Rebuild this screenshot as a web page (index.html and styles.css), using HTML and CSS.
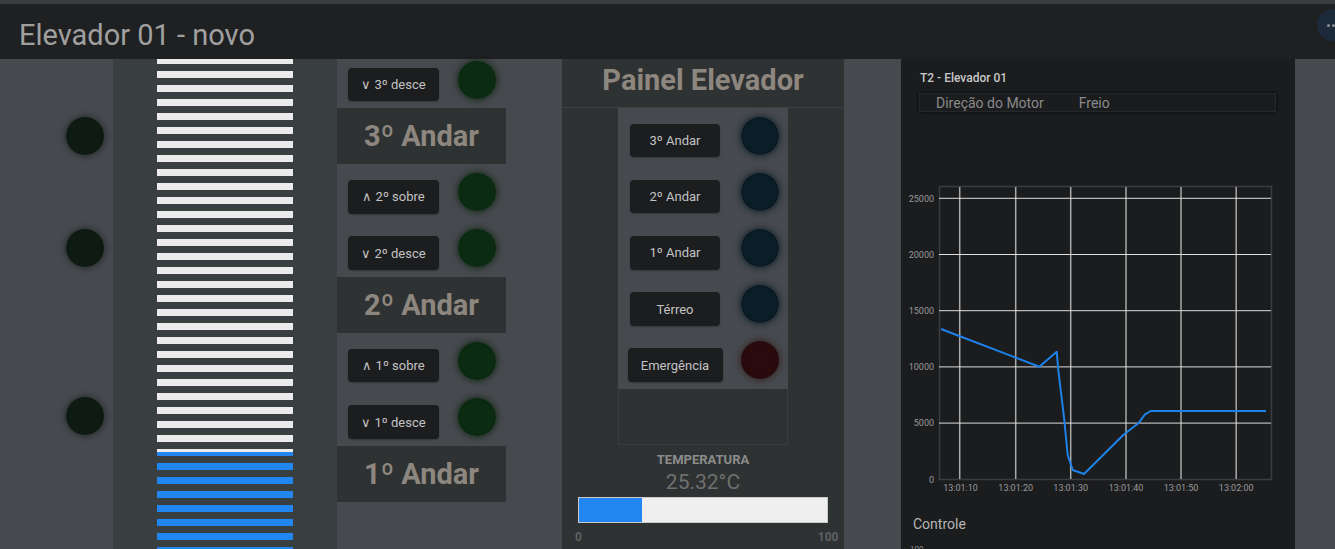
FILE: index.html
```html
<!DOCTYPE html>
<html lang="pt">
<head>
<meta charset="utf-8">
<title>Elevador 01 - novo</title>
<link rel="stylesheet" href="styles.css">
</head>
<body>
<div class="topline"></div>
<header class="header">
  <h1 class="title">Elevador 01 - novo</h1>
  <button class="menu-btn" aria-label="menu"><span class="dot"></span><span class="dot"></span><span class="dot"></span></button>
</header>
<main class="main">
  <section class="col-leds">
    <div class="led led-black led-l1"></div>
    <div class="led led-black led-l2"></div>
    <div class="led led-black led-l3"></div>
  </section>

  <section class="col-shaft">
    <div class="shaft"></div>
  </section>

  <section class="col-calls">
    <div class="call-row"><div class="btn call-btn">∨ 3º desce</div><div class="led led-green"></div></div>
    <div class="floor">3º Andar</div>
    <div class="call-row"><div class="btn call-btn">∧ 2º sobre</div><div class="led led-green"></div></div>
    <div class="call-row"><div class="btn call-btn">∨ 2º desce</div><div class="led led-green"></div></div>
    <div class="floor">2º Andar</div>
    <div class="call-row"><div class="btn call-btn">∧ 1º sobre</div><div class="led led-green"></div></div>
    <div class="call-row"><div class="btn call-btn">∨ 1º desce</div><div class="led led-green"></div></div>
    <div class="floor">1º Andar</div>
  </section>

  <section class="col-panel">
    <div class="panel-title">Painel Elevador</div>
    <div class="panel-body">
      <div class="keypad">
        <div class="keys">
          <div class="key-row"><div class="key-cell"><div class="btn key">3º Andar</div></div><div class="led led-blue"></div></div>
          <div class="key-row"><div class="key-cell"><div class="btn key">2º Andar</div></div><div class="led led-blue"></div></div>
          <div class="key-row"><div class="key-cell"><div class="btn key">1º Andar</div></div><div class="led led-blue"></div></div>
          <div class="key-row"><div class="key-cell"><div class="btn key">Térreo</div></div><div class="led led-blue"></div></div>
          <div class="key-row"><div class="key-cell"><div class="btn key key-wide">Emergência</div></div><div class="led led-red"></div></div>
        </div>
        <div class="keys-foot"></div>
      </div>
    </div>
    <div class="gauge">
      <div class="gauge-title">TEMPERATURA</div>
      <div class="gauge-value">25.32°C</div>
      <div class="gauge-bar"><div class="gauge-fill" style="width:25.32%"></div></div>
      <div class="gauge-scale"><span>0</span><span>100</span></div>
    </div>
  </section>

  <div class="spacer"></div>

  <section class="col-chart">
    <div class="chart-title">T2 - Elevador 01</div>
    <div class="legend"><span>Direção do Motor</span><span>Freio</span></div>
    <svg class="chart" width="394" height="320" viewBox="0 0 394 320">
      <rect x="38.5" y="6.5" width="332" height="293" fill="none" stroke="#3b3c3f" stroke-width="1.5"/>
      <g stroke="#a9a9a9" stroke-width="1.5">
        <line x1="58.7" y1="7" x2="58.7" y2="299"/>
        <line x1="114.7" y1="7" x2="114.7" y2="299"/>
        <line x1="169.7" y1="7" x2="169.7" y2="299"/>
        <line x1="225" y1="7" x2="225" y2="299"/>
        <line x1="280" y1="7" x2="280" y2="299"/>
        <line x1="335.2" y1="7" x2="335.2" y2="299"/>
      </g>
      <g stroke="#dedede" stroke-width="1">
        <line x1="38" y1="18.3" x2="370" y2="18.3"/>
        <line x1="38" y1="74.5" x2="370" y2="74.5"/>
        <line x1="38" y1="130.7" x2="370" y2="130.7"/>
        <line x1="38" y1="186.9" x2="370" y2="186.9"/>
        <line x1="38" y1="243.1" x2="370" y2="243.1"/>
      </g>
      <g class="axis" text-anchor="end">
        <text x="33" y="21.5">25000</text>
        <text x="33" y="77.7">20000</text>
        <text x="33" y="133.9">15000</text>
        <text x="33" y="190.1">10000</text>
        <text x="33" y="246.3">5000</text>
        <text x="33" y="302.5">0</text>
      </g>
      <g class="axis" text-anchor="middle">
        <text x="59.5" y="311">13:01:10</text>
        <text x="114.7" y="311">13:01:20</text>
        <text x="169.7" y="311">13:01:30</text>
        <text x="225" y="311">13:01:40</text>
        <text x="280" y="311">13:01:50</text>
        <text x="335.2" y="311">13:02:00</text>
      </g>
      <polyline fill="none" stroke="#1e82ea" stroke-width="2" stroke-linejoin="round"
        points="40,149 138.3,186.7 155.7,171.7 157.3,190 163.3,240 166.7,275 171.7,290 183,294 222.3,255 237.3,243.3 244,234.3 249.7,231 365,231"/>
    </svg>
    <div class="controle">Controle</div>
    <div class="tiny">100</div>
  </section>
</main>
</body>
</html>
```

FILE: styles.css
```css
* { box-sizing: border-box; margin: 0; padding: 0; }
html, body { width: 1335px; height: 549px; overflow: hidden; }
body {
  background: #464a4e;
  font-family: Roboto, "Liberation Sans", Arial, sans-serif;
  position: relative;
}

.topline { height: 4px; background: #3b3c3e; }
.header { height: 55px; background: #1f2022; padding: 16px 0 0 19px; }
.title { font-size: 29px; line-height: 30px; font-weight: 400; color: #a0a0a0; }
.menu-btn {
  position: absolute; top: 9px; left: 1317px;
  width: 32px; height: 32px; border-radius: 50%;
  background: #1d2a3b; border: none;
  display: flex; align-items: center; gap: 2.6px; padding-left: 9.5px;
}
.dot { width: 3px; height: 3px; border-radius: 50%; background: #8a8f96; }

.main { display: flex; height: 490px; }

/* LEDs */
.led { width: 38px; height: 38px; border-radius: 50%; flex: none; }
.led-black { background: radial-gradient(circle, #0e1b13 55%, #0a140e 100%); box-shadow: 0 0 6px 1px rgba(0,0,0,.45); }
.led-green { background: radial-gradient(circle, #0b2c12 55%, #07200c 100%); box-shadow: 0 0 6px 1px rgba(8,30,10,.75); }
.led-blue  { background: radial-gradient(circle, #0a1e27 55%, #07161d 100%); box-shadow: 0 0 6px 1px rgba(5,22,32,.75); }
.led-red   { background: radial-gradient(circle, #2a0a0d 55%, #1e0709 100%); box-shadow: 0 0 6px 1px rgba(50,8,10,.6); }

.col-leds { width: 113px; padding: 58px 0 0 66px; display: flex; flex-direction: column; }
.led-l2 { margin-top: 74px; }
.led-l3 { margin-top: 130px; }

.col-shaft { width: 224px; background: #393e40; padding-left: 44px; }
.shaft {
  width: 136px; height: 100%;
  background:
    repeating-linear-gradient(to bottom, transparent 0 5px, #393e40 5px 12px, transparent 12px 14px),
    linear-gradient(to bottom, #ebebeb 0 393px, #2186f0 393px);
}

/* buttons */
.btn {
  background: #1c1d1f; color: #c3c3c3; border-radius: 4px;
  font-size: 13px; height: 33.5px;
  display: flex; align-items: center; justify-content: center;
  box-shadow: 0 1px 2px rgba(0,0,0,.25);
  white-space: nowrap;
}

.col-calls { width: 225px; display: grid; grid-template-rows: 49px repeat(7, 56.3px); align-content: start; }
.call-row { display: flex; align-items: flex-end; padding-left: 11px; }
.call-btn { width: 91px; margin-bottom: 7px; }
.call-row .led { margin-left: 19px; margin-bottom: 9.5px; }
.floor {
  width: 169px; background: #2e3233;
  display: flex; align-items: center; justify-content: center;
  font-size: 29px; font-weight: 700; color: #8e877f;
}

.col-panel { width: 282px; display: flex; flex-direction: column; }
.panel-title {
  height: 49px; background: #2e3233; border-bottom: 1px solid #3a3f41;
  text-align: center; font-size: 29px; font-weight: 700; line-height: 42px; color: #8e877f;
}
.panel-body { height: 337px; background: #2e3233; padding-left: 56px; display: flex; }
.keypad { width: 170px; display: flex; flex-direction: column; }
.keys { background: #464a4e; display: grid; grid-template-rows: repeat(5, 56.2px); }
.keys-foot { flex: 1; border: 1px solid #393d3f; border-top: none; }
.key-row { display: flex; align-items: flex-end; }
.key-cell { width: 114px; display: flex; justify-content: center; }
.key { width: 90px; margin-bottom: 7px; }
.key-wide { width: 95px; }
.key-row .led { margin-left: 9px; margin-bottom: 9.5px; }

.gauge { flex: 1; background: #2e3233; padding: 8px 16px 0 16px; text-align: center; }
.gauge-title { font-size: 13px; line-height: 13px; font-weight: 700; color: #8c8c8c; }
.gauge-value { font-size: 21px; line-height: 21px; color: #6f6f6f; margin-top: 5.6px; }
.gauge-bar { margin-top: 4.4px; height: 25.7px; width: 250px; background: #efefef; border: 1px solid #c9c9c9; display: flex; }
.gauge-fill { background: #2186f0; height: 100%; }
.gauge-scale {
  display: flex; justify-content: space-between;
  margin: 8.6px -10.5px 0 -3px;
  font-size: 12px; line-height: 12px; font-weight: 700; color: #5c6163;
}

.spacer { width: 57px; }

.col-chart { width: 394px; background: #1b1c1e; padding-top: 12.6px; }
.chart-title { font-size: 12px; line-height: 12px; font-weight: 500; color: #c8c8c8; padding-left: 19px; }
.legend {
  margin: 9.4px 0 0 18px; width: 357px; height: 19px;
  border: 1px solid #26272a; box-shadow: 0 0 4px rgba(0,0,0,.7);
  padding: 1px 0 0 16px; display: flex; gap: 35px;
  font-size: 14px; line-height: 16px; color: #8a8a8a;
}
.chart { display: block; margin-top: 68px; }
.axis { font-family: Roboto, "Liberation Sans", Arial, sans-serif; font-size: 9px; fill: #9a9a9a; }
.controle { margin-top: 17.2px; padding-left: 12px; font-size: 14px; line-height: 14px; color: #b5b5b5; }
.tiny { margin-top: 13px; padding-left: 9px; font-size: 8px; line-height: 9px; color: #8a8a8a; }
```
